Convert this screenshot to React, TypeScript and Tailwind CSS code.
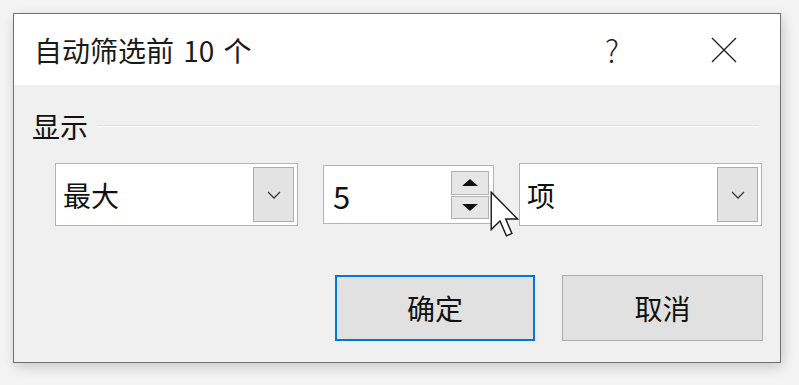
// Excel "自动筛选前 10 个" dialog
const font = { fontFamily: '"Noto Sans CJK SC", "Noto Sans", sans-serif' };

function Chevron() {
    return (
        <svg width="14" height="8" viewBox="0 0 14 8" fill="none">
            <polyline points="1,1 7,7 13,1" stroke="#3a3a3a" strokeWidth="1.3" />
        </svg>
    );
}

function Combo({ label }: { label: string }) {
    return (
        <div className="flex h-[63px] w-[243px] items-stretch border border-[#b4b4b4] bg-white py-[3px] pr-[3px]">
            <div className="flex flex-1 items-center pl-[7px] text-[28px] leading-none text-[#111]">{label}</div>
            <div className="flex w-[41px] items-center justify-center border border-[#adadad] bg-[#e3e3e3]">
                <Chevron />
            </div>
        </div>
    );
}

function Cursor() {
    return (
        <svg className="absolute left-[490px] top-[191px]" width="30" height="47" viewBox="0 0 12.6 19.8">
            <path
                d="M0.5 0.5 L0.5 16.2 L4.2 12.6 L6.9 18.9 L9.2 17.9 L6.6 11.8 L11.6 11.8 Z"
                fill="#ffffff"
                stroke="#1a1a1a"
                strokeWidth="0.6"
                strokeLinejoin="miter"
            />
        </svg>
    );
}

export default function App() {
    return (
        <div className="relative h-[385px] w-[799px] overflow-hidden bg-[#f4f4f4] pl-[13px] pt-[13px]" style={font}>
            <div className="flex h-[350px] w-[768px] flex-col border border-[#707070] bg-[#f0f0f0] shadow-[2px_4px_12px_rgba(0,0,0,0.18)]">
                {/* title bar */}
                <div className="flex h-[71px] items-center bg-white pl-[20px]">
                    <span className="text-[28px] leading-none text-[#1a1a1a] [word-spacing:3px]">自动筛选前 10 个</span>
                    <span className="ml-auto text-[31px] font-light leading-none text-[#222]">?</span>
                    <div className="ml-[92px] mr-[43px] flex h-[26px] w-[26px] items-center justify-center">
                        <svg width="26" height="26" viewBox="0 0 26 26">
                            <path d="M1 1 L25 25 M25 1 L1 25" stroke="#222" strokeWidth="1.4" />
                        </svg>
                    </div>
                </div>

                {/* body */}
                <div className="flex flex-1 flex-col pl-[18px] pr-[17px]">
                    <div className="mt-[28px] flex h-[26px] items-center">
                        <span className="text-[28px] leading-none text-[#111]">显示</span>
                        <div className="ml-[9px] mr-[4px] flex-1 border-t border-b border-t-[#dddddd] border-b-white" />
                    </div>

                    <div className="ml-[23px] mt-[24px] flex items-center gap-[25px]">
                        <Combo label="最大" />
                        <div className="flex h-[59px] w-[171px] items-stretch border border-[#b4b4b4] bg-white pb-[4px] pr-[4px] pt-[5px]">
                            <div className="flex flex-1 items-center pl-[9px] text-[31px] leading-none text-[#111]">5</div>
                            <div className="flex w-[38px] flex-col gap-[1px]">
                                <div className="flex flex-1 items-center justify-center border border-[#b0b0b0] bg-[#e6e6e6]">
                                    <svg width="16" height="7" viewBox="0 0 16 7">
                                        <polygon points="8,0 16,7 0,7" fill="#111" />
                                    </svg>
                                </div>
                                <div className="flex flex-1 items-center justify-center border border-[#b0b0b0] bg-[#e6e6e6]">
                                    <svg width="16" height="7" viewBox="0 0 16 7">
                                        <polygon points="0,0 16,0 8,7" fill="#111" />
                                    </svg>
                                </div>
                            </div>
                        </div>
                        <Combo label="项" />
                    </div>

                    <div className="mt-[49px] flex justify-end gap-[27px]">
                        <button className="h-[66px] w-[200px] border-2 border-[#0078d7] bg-[#e1e1e1] text-[28px] leading-none text-[#111]">
                            确定
                        </button>
                        <button className="h-[66px] w-[201px] border border-[#adadad] bg-[#e1e1e1] text-[28px] leading-none text-[#111]">
                            取消
                        </button>
                    </div>
                </div>
            </div>
            <Cursor />
        </div>
    );
}
